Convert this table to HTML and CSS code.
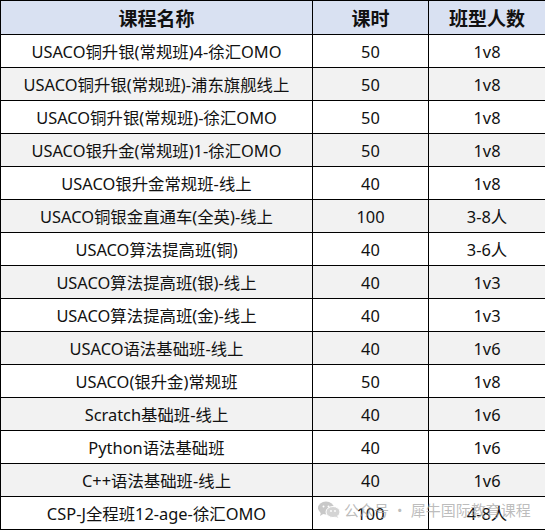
FILE: index.html
```html
<!DOCTYPE html>
<html lang="zh-CN">
<head>
  <meta charset="UTF-8">
  <title>课程列表</title>
  <link rel="stylesheet" href="styles.css">
</head>
<body>
  <div class="sheet">
    <table class="course-table">
      <colgroup>
        <col class="col-name">
        <col class="col-hours">
        <col class="col-size">
      </colgroup>
      <thead>
        <tr>
          <th>课程名称</th>
          <th>课时</th>
          <th>班型人数</th>
        </tr>
      </thead>
      <tbody>
        <tr><td>USACO铜升银(常规班)4-徐汇OMO</td><td>50</td><td>1v8</td></tr>
        <tr><td>USACO铜升银(常规班)-浦东旗舰线上</td><td>50</td><td>1v8</td></tr>
        <tr><td>USACO铜升银(常规班)-徐汇OMO</td><td>50</td><td>1v8</td></tr>
        <tr><td>USACO银升金(常规班)1-徐汇OMO</td><td>50</td><td>1v8</td></tr>
        <tr><td>USACO银升金常规班-线上</td><td>40</td><td>1v8</td></tr>
        <tr><td>USACO铜银金直通车(全英)-线上</td><td>100</td><td>3-8人</td></tr>
        <tr><td>USACO算法提高班(铜)</td><td>40</td><td>3-6人</td></tr>
        <tr><td>USACO算法提高班(银)-线上</td><td>40</td><td>1v3</td></tr>
        <tr><td>USACO算法提高班(金)-线上</td><td>40</td><td>1v3</td></tr>
        <tr><td>USACO语法基础班-线上</td><td>40</td><td>1v6</td></tr>
        <tr><td>USACO(银升金)常规班</td><td>50</td><td>1v8</td></tr>
        <tr><td>Scratch基础班-线上</td><td>40</td><td>1v6</td></tr>
        <tr><td>Python语法基础班</td><td>40</td><td>1v6</td></tr>
        <tr><td>C++语法基础班-线上</td><td>40</td><td>1v6</td></tr>
        <tr><td>CSP-J全程班12-age-徐汇OMO</td><td>100</td><td>4-8人</td></tr>
      </tbody>
    </table>

    <!-- watermark sits over the last row -->
    <div class="watermark">
      <svg class="wm-icon" width="22" height="17" viewBox="0 0 22 17">
        <ellipse cx="8" cy="7" rx="8" ry="6.5" fill="#c8c8c8"/>
        <path d="M3 11 L2 15 L6 12.5 Z" fill="#c8c8c8"/>
        <ellipse cx="15" cy="11" rx="7" ry="5.5" fill="#d4d4d4" stroke="#fff" stroke-width="1"/>
        <path d="M19 15 L20.5 17 L17 15.5 Z" fill="#d4d4d4"/>
        <circle cx="5.5" cy="5.5" r="1" fill="#fff"/>
        <circle cx="10.5" cy="5.5" r="1" fill="#fff"/>
        <circle cx="13" cy="10" r="0.9" fill="#fff"/>
        <circle cx="17" cy="10" r="0.9" fill="#fff"/>
      </svg>
      <span>公众号 · 犀牛国际教育课程</span>
    </div>
  </div>
</body>
</html>
```

FILE: styles.css
```css
body {
  margin: 0;
  background-color: white;
  font-family: "Noto Sans", "Noto Sans CJK SC", sans-serif;
  color: #111;
}
.sheet {
  position: relative;
  width: 545px;
}
.course-table {
  width: 545px;
  border-collapse: collapse;
  table-layout: fixed;
  font-size: 16.4px;
}
.col-name { width: 312px; }
.col-hours { width: 116px; }
.col-size { width: 117px; }
.course-table th,
.course-table td {
  border: 1px solid #000;
  text-align: center;
  padding: 0;
  white-space: nowrap;
}
.course-table thead tr {
  height: 34px;
  background-color: #d9e1f2;
}
.course-table th {
  font-size: 19px;
  font-weight: bold;
}
.course-table tbody tr {
  height: 33px;
  background-color: white;
}
.course-table tbody tr:nth-child(even) {
  background-color: #f2f2f2;
}
.watermark {
  position: absolute;
  left: 318px;
  top: 499px;
  display: flex;
  align-items: center;
  gap: 4px;
  color: rgba(160, 160, 160, 0.7);
  font-size: 15px;
  font-family: "Noto Sans CJK SC", sans-serif;
}
.wm-icon {
  flex: none;
}
```
